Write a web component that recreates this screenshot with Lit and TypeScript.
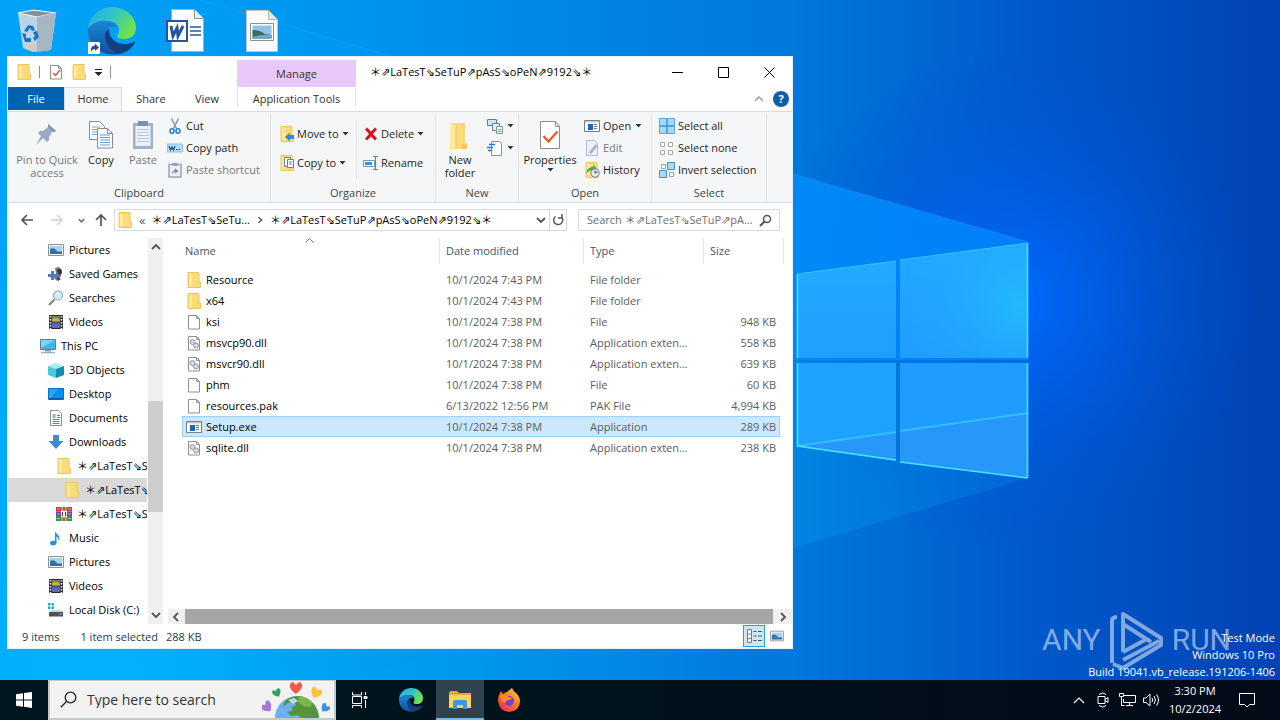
import { LitElement, html, svg, css, nothing } from "lit";
import { customElement, state, property } from "lit/decorators.js";
import { classMap } from "lit/directives/class-map.js";

const FOLDER_NAME = "＊⇗LaTesT⇘SeTuP⇗pAsS⇘oPeN⇗9192⇘＊";

const page = svg`<path d="M2.500 1.500h8l3 3v10.500h-11z" fill="#fff" stroke="#8f8f8f"/><path d="M10.500 1.500v3h3" fill="none" stroke="#8f8f8f"/>`;
const folder = svg`<path d="M2 .5h11v9.500h1.500v5.500H2z" fill="#fbdc78"/><path d="M2 .5h11v9.500h1.500v5.500H2z" fill="none" stroke="#eec65b"/><path d="M3 1.500h3v13H3z" fill="#ffe9a0"/>`;
const picture = svg`<path d="M.5 2.500h15v11H.5z" fill="#fff" stroke="#8a9096"/><path d="M2 4h12v8H2z" fill="#a5d4f3"/><path d="M2 7q4-2 6 1t6 1v1H2z" fill="#3b7396"/><path d="M2 10h12v2H2z" fill="#2c6fae"/>`;
const film = svg`<path d="M1 1h14v14H1z" fill="#2d2d33"/><path d="M4 2h8v5.500H4z" fill="#6d8a4c"/><path d="M4 8.500h8V14H4z" fill="#5668b8"/><path d="M4 5q4-3 8 1v1.500H4z" fill="#c5ad4d"/><path d="M2.500 2v13M13.500 2v13" stroke="#fff" stroke-width="1.500" stroke-dasharray="1.500 1.500"/>`;

const ICONS: Record<string, unknown> = {
  folder,
  file: page,
  dll: svg`${page}<circle cx="6.500" cy="7" r="2.500" fill="#d5dbe0" stroke="#8d9aa4"/><circle cx="10" cy="10.500" r="2.500" fill="#d5dbe0" stroke="#8d9aa4"/>`,
  exe: svg`<path d="M.5 2.500h15v11H.5z" fill="#fff" stroke="#7d7d7d"/><path d="M1 3h14v1.500H1z" fill="#c6ccd1"/><path d="M4 6h5v6H4z" fill="#1668b8"/><path d="M10 6.500h3M10 8.500h3M10 10.500h3" stroke="#777"/>`,
  check: svg`${page}<path d="M5 9l2.500 2.500L12 6" fill="none" stroke="#d9553a" stroke-width="1.500"/>`,
  picture,
  film,
  games: svg`<path d="M7 2l4-1 3 3-1 6-4 5-3-3 2-4z" fill="#6c7479"/><path d="M9 4l4-1 1 4-3 2z" fill="#2b3033"/><path d="M3 5h3v3h3v3H6v3H3v-3H0V8h3z" fill="#4e7fae"/><path d="M9 11l4 2-3 2z" fill="#33393c"/>`,
  search: svg`<path d="M6.500 9.500L1 15" stroke="#8c7a66" stroke-width="2"/><circle cx="10" cy="5.500" r="4.500" fill="#cfeafa" stroke="#8fa9ba" stroke-width="1.200"/><path d="M7.500 5q1-2 3-2" stroke="#fff" fill="none"/>`,
  pc: svg`<path d="M.5 1.500h15v10H.5z" fill="#3fb4ee" stroke="#6a7a86"/><path d="M1 2h14L1 10z" fill="#7bd2f7"/><path d="M5 12h6v1.500H5z" fill="#8fa0ab"/><path d="M1 14.500h14" stroke="#8fb3c6" stroke-width="1.500"/>`,
  cube: svg`<path d="M0 4l8-3 8 3-8 3z" fill="#a5ecf3"/><path d="M0 4l8 3v9l-8-3z" fill="#4cc9d9"/><path d="M16 4L8 7v9l8-3z" fill="#0e93ac"/>`,
  desktop: svg`<path d="M.5 2.500h15v11H.5z" fill="#0d8de6" stroke="#0a72bd"/><path d="M1 3h9L3 12H1z" fill="#27a4f5"/><path d="M1 12h14v1.500H1z" fill="#075a9b"/>`,
  doc: svg`<path d="M2.500.5h8l3 3v12h-11z" fill="#fff" stroke="#8f8f8f"/><path d="M5 5h2M4.500 9.500h7M4.500 11.500h7M9 5.500h3M9 7.500h3M4.500 13.500h7" stroke="#3f8fc9"/><path d="M4.500 4h3v4h-3z" fill="#7fb8df"/>`,
  down: svg`<path d="M5 1h6v6h4.500L8 15 .5 7H5z" fill="#3c8ad3"/>`,
  rar: svg`<path d="M0 1h16v4.500H0z" fill="#c23c4b"/><path d="M0 5.500h16V10H0z" fill="#6a4aa8"/><path d="M0 10h16v5H0z" fill="#2f9a4b"/><path d="M5 1h6v14H5z" fill="#b9a06a"/><path d="M5 5h6v6H5z" fill="#f6efe0"/><path d="M6.500 6v4M9.500 6v4M8 1v3M8 12v3" stroke="#5b3a22"/><path d="M1 3h3M12 3h3M1 8h3M12 8h3M1 12.500h3M12 12.500h3" stroke="#fff" stroke-opacity=".5"/>`,
  music: svg`<path d="M7 1c.5 3 5 4 4.500 8-.3 1-.5 1.500-1 2 .5-3-1-4-2-4.500V13c0 1.500-1.500 2.500-3.500 2.500S2 14.500 2 13s1.500-2.300 3-2.300c1 0 1.500.2 2 .4z" fill="#1f93e6"/>`,
  disk: svg`<path d="M1 10l3-2h9l2 2z" fill="#cfd4d6"/><path d="M1 10h14v4.500H1z" fill="#4a5257"/><path d="M11 12h3" stroke="#4fe07a"/><path d="M0 1h2.500v2.500H0zM3.500 1H6v2.500H3.500zM0 4.500h2.500V7H0zM3.500 4.500H6V7H3.500z" fill="#19aee0"/>`,
  cut: svg`<path d="M4.500.5l5 10M11.500.5l-5 10" stroke="#8697a5" stroke-width="1.500"/><ellipse cx="5" cy="13" rx="2" ry="2.200" fill="none" stroke="#2c82c9" stroke-width="1.600"/><ellipse cx="11" cy="13" rx="2" ry="2.200" fill="none" stroke="#2c82c9" stroke-width="1.600"/>`,
  path: svg`<path d="M.5 4h15v8H.5z" fill="#b5ddf4" stroke="#8cc4e6"/><path d="M2 6l1.500 4L5 7l1.500 3L8 6M9 9.500h1.500M11.500 9.500H13" fill="none" stroke="#1d4a7c" stroke-width="1.200"/>`,
  shortcut: svg`<path d="M2 2.500h12v12.500H2z" fill="#eef1f8" stroke="#98a5c0" stroke-width="1.500"/><path d="M5.500.8h5V4h-5z" fill="#98a5c0"/><path d="M5 12.500c0-3 1-4 3-4.500V6l3.500 3L8 12v-2c-1.500.3-2 1-3 2.500z" fill="#8190b0"/>`,
  moveto: svg`${folder}<path d="M15 9h-4V6.500L6 11l5 4.500V13h4z" fill="#3b84cf"/>`,
  copyto: svg`${folder}<path d="M5.500 2.500h6v9h-6z" fill="#fff" stroke="#68809a"/><path d="M8.500 4.500h6v8h-6z" fill="#fff" stroke="#68809a"/><path d="M10 7h3M10 9h3" stroke="#4a90d0"/>`,
  del: svg`<path d="M2 3.500L4 1.500l4 4 4-4 2 2-4 4.500 4 4.500-2 2-4-4-4 4-2-2L6 8z" fill="#d3141f"/>`,
  rename: svg`<path d="M.5 5.500h11v6H.5z" fill="#fff" stroke="#7c93a8"/><path d="M2 7h7v3H2z" fill="#3e8fd2"/><path d="M10 1.500h5M12.500 1.500v13M10 14.500h5" stroke="#6c7d8c"/>`,
  newitem: svg`<path d="M.5 1.500h9v6h-9z" fill="#cde5f6" stroke="#4c7faa"/><path d="M5.500 5.500h7v7h-7z" fill="#e3eef7" stroke="#687f92"/><path d="M9.500 8.500h6v7h-6z" fill="#fff" stroke="#8f8f8f"/><path d="M11 11.500h3M11 13.500h3" stroke="#d8765c"/>`,
  easy: svg`<path d="M4.500 1.500h8l2 2v12h-10z" fill="#fff" stroke="#87919a"/><path d="M2 4.500h6M0 7.500h6M1 10.500h4" stroke="#2b78bd" stroke-width="1.300"/>`,
  edit: svg`<path d="M2.500.5h8l3 3v12h-11z" fill="#eef1f9" stroke="#b1bad0"/><path d="M4.500 13l7-9 2.500 2-7 8z" fill="#a9b5d3"/>`,
  history: svg`${folder}<path d="M2 12q1-7 7-7V2.500L13 7l-4 4V8Q5 8 2 12z" fill="#3daa43"/><circle cx="11" cy="11" r="4.200" fill="#e5e9ea" stroke="#757c80"/><path d="M11 8.500V11l2.500-1" fill="none" stroke="#444"/>`,
  selall: svg`<path d="M.5.5h15v15H.5z" fill="#a6d8fa" stroke="#5aa7df"/><path d="M8 1v14M1 8h14" stroke="#3d94d2" stroke-width="1.500"/>`,
  selnone: svg`<path d="M1.500 2.500h4v4h-4zM9.500 2.500h4v4h-4zM1.500 10.500h4v4h-4zM9.500 10.500h4v4h-4z" fill="#fff" stroke="#a8a8a8"/>`,
  selinv: svg`<path d="M8.500.5h7v7h-7zM.5 8.500h7v7h-7z" fill="#a9d8f9" stroke="#3d94d2"/><path d="M2.500 2.500h4v4h-4zM10.500 10.500h4v4h-4z" fill="#fff" stroke="#8fa5b5"/>`,
  details: svg`<path d="M1.500 1.500h4v13h-4z" fill="#fff" stroke="#8b7474"/><path d="M1 6h5M1 10.500h5" stroke="#8b7474"/><path d="M7.500 3.500h3M12 3.500h4M7.500 8h3M12 8h4M7.500 12.500h3M12 12.500h4" stroke="#555"/>`,
};

const icon = (name: string) => html`<svg class="i16" viewBox="0 0 16 16" aria-hidden="true">${ICONS[name]}</svg>`;

const BIG: Record<string, unknown> = {
  pin: svg`<path d="M17 5l8 7-2 1-2 0-3 5v3l-2 2-4-4-7 7 5-9-3-3 2-2h3l5-4z" fill="#97a9c5"/><path d="M17 5l8 7-2 1-6-5z" fill="#7d91b3"/>`,
  copy: svg`<path d="M4.500 2.500h10l5 5v13h-15z" fill="#fff" stroke="#7f8b96"/><path d="M7 8h8M7 10.500h8M7 13h8M7 15.500h8" stroke="#6fa8dc"/><path d="M12.500 9.500h10l5 5v14.500h-15z" fill="#fff" stroke="#7f8b96"/><path d="M22.500 9.500v5h5" fill="none" stroke="#7f8b96"/><path d="M15 16h10M15 18.500h10M15 21h10M15 23.500h10M15 26h10" stroke="#5f9fd8"/>`,
  paste: svg`<path d="M6 4h20v26H6z" fill="#a3b0cb"/><path d="M8.500 7h15v20h-15z" fill="#edf1f9"/><path d="M11 2h10v5H11z" fill="#7f8fb2"/><path d="M10 10.500h12M10 13.500h12M10 16.500h12M10 19.500h12M10 22.500h12" stroke="#b9c5de"/>`,
  bigfolder: svg`<path d="M6 4h15v20h2v6H6z" fill="#fbd878"/><path d="M6 4l6 3v24l-6-3z" fill="#ffe9a6"/><path d="M12 7v23" stroke="#ecc45c"/><path d="M18 25h5v5h-5z" fill="#f6c755"/>`,
  props: svg`<path d="M6.500 2.500h15l4 5v22h-19z" fill="#fff" stroke="#8c8c8c"/><path d="M21.500 2.500v5h4" fill="none" stroke="#8c8c8c"/><path d="M9.500 17l5 5.500 9-10" fill="none" stroke="#e3602b" stroke-width="2.500"/>`,
};
const big = (name: string) => html`<svg class="i32" viewBox="0 0 32 32" aria-hidden="true">${BIG[name]}</svg>`;
const caret = html`<svg class="caret" viewBox="0 0 7 4" aria-hidden="true"><path d="M.5 0h6l-3 3.500z" fill="#333" /></svg>`;

const edge = svg`
  <defs>
    <linearGradient id="eg" x1="0" y1="0" x2="1" y2=".5"><stop offset="0" stop-color="#2aa7e5"/><stop offset=".5" stop-color="#2fc5c9"/><stop offset="1" stop-color="#6fe04f"/></linearGradient>
    <linearGradient id="eb" x1="0" y1="0" x2="0" y2="1"><stop offset="0" stop-color="#1c86d8"/><stop offset="1" stop-color="#0f4f9e"/></linearGradient>
  </defs>
  <path d="M0 22C1 9 12 0 24 0c14 0 24 10 24 21 0 7-5 11-12 11-4 0-7-1-7-3 0-1 2-2 2-6 0-5-4-9-11-9-8 0-16 4-20 8z" fill="url(#eg)"/>
  <path d="M0 22c4-6 11-9 18-8 6 0 10 3 11 6-5-2-12 1-12 9 0 9 7 16 14 18C13 50-1 39 0 22z" fill="url(#eb)"/>
  <path d="M17 27c-1 10 7 19 14 20 7-1 13-6 16-11 0-1 0-2-1-1-11 5-25 1-25-13-2 1-4 3-4 5z" fill="#123f80"/>`;

const wallpaper = html`<svg class="wallpaper" viewBox="0 0 1280 680" preserveAspectRatio="xMaxYMid slice" aria-hidden="true">
  <defs>
    <linearGradient id="base"><stop offset="0" stop-color="#00a4f8"/><stop offset=".3" stop-color="#0093ee"/><stop offset=".62" stop-color="#0078dc"/><stop offset=".8" stop-color="#005acc"/><stop offset="1" stop-color="#0142b4"/></linearGradient>
    <radialGradient id="glow" gradientUnits="userSpaceOnUse" cx="1010" cy="300" r="250"><stop offset="0" stop-color="#006bff"/><stop offset=".35" stop-color="#0062f2" stop-opacity=".65"/><stop offset="1" stop-color="#0050d0" stop-opacity="0"/></radialGradient>
    <radialGradient id="low" gradientUnits="userSpaceOnUse" cx="100" cy="680" r="650"><stop offset="0" stop-color="#00b8ff" stop-opacity=".8"/><stop offset="1" stop-color="#00a0f0" stop-opacity="0"/></radialGradient>
    <linearGradient id="beam" gradientUnits="userSpaceOnUse" x1="200" y1="0" x2="1028" y2="0"><stop offset="0" stop-color="#00a4f6" stop-opacity=".1"/><stop offset=".72" stop-color="#008cfa" stop-opacity=".9"/><stop offset="1" stop-color="#0088ff" stop-opacity=".75"/></linearGradient>
    <linearGradient id="beamlow" gradientUnits="userSpaceOnUse" x1="200" y1="0" x2="1028" y2="0"><stop offset="0" stop-color="#00a4f6" stop-opacity="0"/><stop offset=".72" stop-color="#0088e4" stop-opacity=".8"/><stop offset="1" stop-color="#006cd8" stop-opacity=".7"/></linearGradient>
    <linearGradient id="pane" x1="0" y1="0" x2="0" y2="1"><stop offset="0" stop-color="#22aaff"/><stop offset="1" stop-color="#1f9eff"/></linearGradient>
    <radialGradient id="shine" gradientUnits="userSpaceOnUse" cx="1020" cy="305" r="110"><stop offset="0" stop-color="#25c0fa" stop-opacity=".7"/><stop offset="1" stop-color="#22a8ff" stop-opacity="0"/></radialGradient>
  </defs>
  <path d="M0 0h1280v680H0z" fill="url(#base)"/>
  <path d="M0 0h1280v680H0z" fill="url(#low)"/>
  <path d="M0 0h1280v680H0z" fill="url(#glow)"/>
  <path d="M200 0l593 174 235 68v118H200z" fill="url(#beam)"/>
  <path d="M1028 478L793 548 350 680H200V360h828z" fill="url(#beamlow)"/>
  <path d="M200 0l593 174 235 68" fill="none" stroke="#2aa3ff" stroke-opacity=".35"/>
  <path d="M797 274l99-13v97h-99z" fill="url(#pane)"/>
  <path d="M900 260l128-17v115H900z" fill="url(#pane)"/>
  <path d="M900 260l128-17v115H900z" fill="url(#shine)"/>
  <path d="M797 363h99v98l-99-15z" fill="#1ea2ff"/>
  <path d="M900 363h128v115l-128-16z" fill="#1f9cff"/>
  <path d="M797 446l99-14v29zM900 431l128-18v65l-128-16z" fill="#2797fa"/>
  <path d="M797 446l99-14M900 431l128-18" stroke="#35bdff" stroke-width="2"/>
  <path d="M797.500 274v84M797.500 363v83l98.500 14M900 462l127.500 16M1027.500 243v115M1027.500 363v115" fill="none" stroke="#47e3ff" stroke-width="1.600"/>
  <path d="M797 274l99-13M900 260l128-17" stroke="#36c5ff"/>
</svg>`;

@customElement("file-ribbon")
export class FileRibbon extends LitElement {
  static styles = css`
    :host { display: flex; background: #f5f6f7; border-block: 1px solid #dadbdc; padding-top: 2px; }
    .group { display: flex; flex-direction: column; border-right: 1px solid #e0e1e3; box-sizing: border-box; flex: none; }
    .body { display: flex; height: 70px; padding-top: 1px; box-sizing: border-box; }
    .label { text-align: center; line-height: 18px; color: #444; }
    .clip { width: 263px; } .org { width: 165px; } .new { width: 83px; } .open { width: 133px; } .sel { width: 115px; }
    .clip .body { padding-left: 6px; }
    button { font: inherit; color: #1e1e1e; background: none; border: 0; padding: 0; display: flex; align-items: center; white-space: nowrap; }
    .large { flex: none; flex-direction: column; line-height: 13px; padding-top: 4px; gap: 2px; text-align: center; justify-content: flex-start; width: 42px; white-space: normal; }
    .large.wide { width: 66px; }
    .large.create { width: 48px; }
    .large.props { width: 62px; }
    .off { color: #767676; }
    .stack { display: flex; flex-direction: column; padding-left: 7px; }
    .stack.tight { padding-left: 3px; }
    .stack button { height: 22px; gap: 3px; }
    .stack.two { padding: 4px 0 0 8px; width: 85px; box-sizing: border-box; }
    .stack.two button { height: 29px; gap: 2px; }
    .stack.two.right { padding-left: 6px; width: 77px; }
    .rule { width: 1px; background: #e0e1e3; margin: 5px 0; }
    .i16 { width: 16px; height: 16px; flex: none; }
    .i32 { width: 32px; height: 32px; flex: none; }
    .caret { width: 7px; height: 4px; margin-left: 1px; flex: none; }
  `;
  render() {
    return html`
      <div class="group clip">
        <div class="body">
          <button class="large wide off">${big("pin")}<span>Pin to Quick access</span></button>
          <button class="large">${big("copy")}<span>Copy</span></button>
          <button class="large off">${big("paste")}<span>Paste</span></button>
          <div class="stack tight">
            <button>${icon("cut")}<span>Cut</span></button>
            <button>${icon("path")}<span>Copy path</span></button>
            <button class="off">${icon("shortcut")}<span>Paste shortcut</span></button>
          </div>
        </div>
        <div class="label">Clipboard</div>
      </div>
      <div class="group org">
        <div class="body">
          <div class="stack two">
            <button>${icon("moveto")}<span>Move to</span>${caret}</button>
            <button>${icon("copyto")}<span>Copy to</span>${caret}</button>
          </div>
          <div class="rule"></div>
          <div class="stack two right">
            <button>${icon("del")}<span>Delete</span>${caret}</button>
            <button>${icon("rename")}<span>Rename</span></button>
          </div>
        </div>
        <div class="label">Organize</div>
      </div>
      <div class="group new">
        <div class="body">
          <button class="large create">${big("bigfolder")}<span>New folder</span></button>
          <div class="stack tight">
            <button aria-label="New item">${icon("newitem")}${caret}</button>
            <button aria-label="Easy access">${icon("easy")}${caret}</button>
          </div>
        </div>
        <div class="label">New</div>
      </div>
      <div class="group open">
        <div class="body">
          <button class="large props">${big("props")}<span>Properties</span>${caret}</button>
          <div class="stack tight">
            <button>${icon("exe")}<span>Open</span>${caret}</button>
            <button class="off">${icon("edit")}<span>Edit</span></button>
            <button>${icon("history")}<span>History</span></button>
          </div>
        </div>
        <div class="label">Open</div>
      </div>
      <div class="group sel">
        <div class="body">
          <div class="stack">
            <button>${icon("selall")}<span>Select all</span></button>
            <button>${icon("selnone")}<span>Select none</span></button>
            <button>${icon("selinv")}<span>Invert selection</span></button>
          </div>
        </div>
        <div class="label">Select</div>
      </div>
    `;
  }
}

type FileRow = { icon: string; name: string; date: string; type: string; size: string };
const FILES: FileRow[] = [
  { icon: "folder", name: "Resource", date: "10/1/2024 7:43 PM", type: "File folder", size: "" },
  { icon: "folder", name: "x64", date: "10/1/2024 7:43 PM", type: "File folder", size: "" },
  { icon: "file", name: "ksi", date: "10/1/2024 7:38 PM", type: "File", size: "948 KB" },
  { icon: "dll", name: "msvcp90.dll", date: "10/1/2024 7:38 PM", type: "Application exten...", size: "558 KB" },
  { icon: "dll", name: "msvcr90.dll", date: "10/1/2024 7:38 PM", type: "Application exten...", size: "639 KB" },
  { icon: "file", name: "phm", date: "10/1/2024 7:38 PM", type: "File", size: "60 KB" },
  { icon: "file", name: "resources.pak", date: "6/13/2022 12:56 PM", type: "PAK File", size: "4,994 KB" },
  { icon: "exe", name: "Setup.exe", date: "10/1/2024 7:38 PM", type: "Application", size: "289 KB" },
  { icon: "dll", name: "sqlite.dll", date: "10/1/2024 7:38 PM", type: "Application exten...", size: "238 KB" },
];

const TREE: [string, string, number][] = [
  ["picture", "Pictures", 1], ["games", "Saved Games", 1], ["search", "Searches", 1], ["film", "Videos", 1],
  ["pc", "This PC", 0], ["cube", "3D Objects", 1], ["desktop", "Desktop", 1], ["doc", "Documents", 1],
  ["down", "Downloads", 1], ["folder", FOLDER_NAME, 2], ["folder", FOLDER_NAME, 3], ["rar", FOLDER_NAME, 2],
  ["music", "Music", 1], ["picture", "Pictures", 1], ["film", "Videos", 1], ["disk", "Local Disk (C:)", 1],
];

const chevron = (d: string) => html`<svg class="chev" viewBox="0 0 10 10" aria-hidden="true"><path d=${d} fill="none" stroke="#555" stroke-width="1.800" /></svg>`;

@customElement("explorer-window")
export class ExplorerWindow extends LitElement {
  @state() private selected = 7;

  static styles = css`
    :host { display: flex; flex-direction: column; background: #fff; border: 1px solid #e6f1fa; box-sizing: border-box; color: #000; }
    button { font: inherit; color: inherit; background: none; border: 0; padding: 0; }
    .i16 { width: 16px; height: 16px; flex: none; display: block; }
    .chev { width: 10px; height: 10px; display: block; }
    header { display: flex; }
    .left { width: 229px; flex: none; }
    .quick { height: 30px; display: flex; align-items: center; padding-left: 8px; gap: 7px; box-sizing: border-box; }
    .bar { width: 1px; height: 12px; background: #8c8c8c; }
    .bar.far { margin-right: 1px; }
    .drop { display: flex; }
    .drop svg { width: 9px; height: 9px; }
    .tabs { display: flex; height: 24px; color: #333; }
    .tabs button { line-height: 22px; width: 58px; height: 23px; }
    .tabs .file { background: #0063b1; color: #fff; width: 56px; }
    .tabs .home { background: #f5f6f7; border: 1px solid #dadbdc; border-bottom: 0; height: 24px; line-height: 20px; padding-bottom: 1px; margin-bottom: -1px; position: relative; z-index: 1; }
    .tabs .view { width: 54px; }
    .context { width: 119px; flex: none; padding-top: 3px; display: flex; flex-direction: column; color: #333; }
    .manage { background: #e9c9fb; height: 27px; line-height: 28px; text-align: center; }
    .context button { border-inline: 1px solid #eadcf3; height: 18px; line-height: 22px; margin-top: 1px; white-space: nowrap; }
    .right { flex: 1; min-width: 0; }
    .title { display: flex; height: 30px; padding-left: 14px; align-items: center; }
    h1 { flex: 1; min-width: 0; font: inherit; margin: 0; white-space: nowrap; }
    .title button { width: 46px; height: 30px; display: grid; place-items: center; }
    .title svg { width: 11px; height: 11px; }
    .tools { display: flex; justify-content: flex-end; align-items: center; gap: 9px; height: 23px; padding-right: 3px; }
    .tools svg { display: block; }
    .help { width: 16px; height: 16px; border-radius: 8px; background: #0f5ea8; color: #fff; font-weight: 700; line-height: 16px; text-align: center; }
    .address { display: flex; align-items: center; padding: 6px 12px 7px 12px; height: 22px; }
    .nav { width: 94px; display: flex; align-items: center; flex: none; }
    .nav svg { width: 14px; height: 14px; display: block; }
    .nav button:nth-child(1) { width: 30px; }
    .nav button:nth-child(2) { width: 27px; }
    .nav button:nth-child(3) { width: 17px; }
    .nav .chev { width: 9px; height: 9px; opacity: .8; }
    .crumbs { flex: 1; min-width: 0; display: flex; align-items: center; border: 1px solid #d9d9d9; height: 22px; box-sizing: border-box; padding-left: 2px; white-space: nowrap; }
    .crumbs .sep { width: 20px; display: grid; place-items: center; }
    .crumbs .sep svg { width: 8px; height: 8px; }
    .crumbs .first { padding: 0 6px 0 6px; font-size: 13px; color: #555; }
    .crumbs .end { margin-left: auto; display: flex; height: 100%; }
    .crumbs .end button { width: 16px; display: grid; place-items: center; }
    .crumbs .end button + button { border-left: 1px solid #d9d9d9; width: 17px; }
    .find { width: 202px; height: 22px; box-sizing: border-box; border: 1px solid #d9d9d9; margin-left: 11px; display: flex; align-items: center; padding: 0 7px 0 8px; }
    .find input { flex: 1; min-width: 0; border: 0; outline: 0; background: none; padding: 0; font: inherit; text-overflow: ellipsis; }
    .find input::placeholder { color: #6d6d6d; opacity: 1; }
    .find svg { width: 13px; height: 13px; flex: none; }
    .main { display: flex; flex: 1; min-height: 0; }
    .tree { width: 139px; flex: none; margin: 0; padding: 0; list-style: none; overflow: hidden; }
    .tree button { display: flex; align-items: center; gap: 5px; height: 24px; width: 100%; white-space: nowrap; padding-left: 40px; }
    .tree .l0 { padding-left: 32px; }
    .tree .l2 { padding-left: 48px; }
    .tree .l3 { padding-left: 56px; }
    .tree .on { background: #d9d9d9; }
    .vscroll { width: 15px; background: #f0f0f0; margin-left: 1px; display: flex; flex-direction: column; align-items: center; box-sizing: border-box; padding: 4px 0; }
    .vscroll .thumb { width: 15px; background: #cdcdcd; flex: 112; }
    .vscroll .before { flex: 149; } .vscroll .after { flex: 98; }
    .list { flex: 1; min-width: 0; display: flex; flex-direction: column; padding-left: 5px; }
    .scroller { flex: 1; overflow: hidden; }
    table { border-collapse: separate; border-spacing: 0; table-layout: fixed; width: calc(100% - 8px); padding-left: 14px; }
    .c-date { width: 144px; } .c-type { width: 120px; } .c-size { width: 76px; } .c-gap { width: 4px; }
    th { font-weight: 400; text-align: left; padding: 0; height: 26px; color: #44546f; border-right: 1px solid #e5e5e5; padding-left: 6px; line-height: 26px; }
    th:first-child { padding-left: 3px; }
    .c-size-h { border-right: 0; }
    th:last-child { padding: 0; }
    .name-h { display: grid; grid-template-columns: 1fr 14px 1fr; }
    .name-h svg { width: 9px; height: 5px; }
    .spacer td { height: 5px; padding: 0; line-height: 0; }
    .row td { height: 19px; line-height: 17px; padding: 0 4px 0 6px; border-block: 1px solid transparent; color: #5c5c5c; white-space: nowrap; overflow: hidden; }
    .row td:first-child { padding-left: 3px; color: #000; border-left: 1px solid transparent; }
    .row td.size { text-align: right; padding-right: 3px; border-right: 1px solid transparent; }
    .row td.gap { padding: 0; }
    .row.on td:not(.gap) { background: #cce8ff; border-color: #99d1ff; }
    .cell { display: flex; align-items: center; gap: 4px; }
    .hscroll { height: 15px; background: #f0f0f0; display: flex; align-items: center; justify-content: space-between; padding: 0 4px 0 3px; }
    .hscroll .thumb { flex: 1; height: 15px; background: #a6a6a6; margin: 0 5px 0 4px; }
    footer { display: flex; align-items: center; height: 24px; padding: 0 7px 0 14px; color: #1e395b; }
    footer span { margin-right: 21px; line-height: 16px; padding-top: 1px; }
    footer span.tight { margin-right: 8px; }
    .views { margin-left: auto; display: flex; align-items: center; gap: 4px; }
    .views button { width: 16px; height: 22px; display: grid; place-items: center; }
    .views .on { width: 22px; box-sizing: border-box; border: 1px solid #26a0da; background: #cbe8f6; }
    .views .thumbs svg { width: 14px; height: 14px; }
  `;

  render() {
    return html`
      <header>
        <div class="left">
          <div class="quick">
            ${icon("folder")}<span class="bar far"></span>${icon("check")}${icon("folder")}
            <button class="drop" aria-label="Customize Quick Access Toolbar"><svg viewBox="0 0 9 9"><path d="M1 1.500h7" stroke="#222" /><path d="M.5 4h8l-4 4z" fill="#222" /></svg></button>
            <span class="bar"></span>
          </div>
          <div class="tabs"><button class="file">File</button><button class="home">Home</button><button>Share</button><button class="view">View</button></div>
        </div>
        <div class="context"><div class="manage">Manage</div><button>Application Tools</button></div>
        <div class="right">
          <div class="title">
            <h1>${FOLDER_NAME}</h1>
            <button aria-label="Minimize"><svg viewBox="0 0 11 11"><path d="M0 5.500h11" stroke="#000" /></svg></button>
            <button aria-label="Maximize"><svg viewBox="0 0 11 11"><path d="M.5.5h10v10H.5z" fill="none" stroke="#000" /></svg></button>
            <button aria-label="Close"><svg viewBox="0 0 11 11"><path d="M.5.5l10 10M10.500.5l-10 10" stroke="#000" /></svg></button>
          </div>
          <div class="tools">
            <button aria-label="Minimize the Ribbon"><svg width="10" height="6" viewBox="0 0 10 6"><path d="M1 5l4-4 4 4" fill="none" stroke="#999" stroke-width="1.400" /></svg></button>
            <button class="help" aria-label="Help">?</button>
          </div>
        </div>
      </header>
      <file-ribbon></file-ribbon>
      <div class="address">
        <div class="nav">
          <button aria-label="Back"><svg viewBox="0 0 14 14"><path d="M13 7H2M7 2L2 7l5 5" fill="none" stroke="#555" stroke-width="1.700" /></svg></button>
          <button aria-label="Forward"><svg viewBox="0 0 14 14"><path d="M1 7h11M7 2l5 5-5 5" fill="none" stroke="#d0d0d0" stroke-width="1.300" /></svg></button>
          <button aria-label="Recent locations">${chevron("M2 3.500L5 6.500l3-3")}</button>
          <button aria-label="Up"><svg viewBox="0 0 14 14"><path d="M7 13V2M2 7l5-5 5 5" fill="none" stroke="#555" stroke-width="1.700" /></svg></button>
        </div>
        <div class="crumbs">
          ${icon("folder")}<span class="first">«</span><span>＊⇗LaTesT⇘SeTu...</span>
          <span class="sep">${chevron("M3 1.500L7 5 3 8.500")}</span><span>${FOLDER_NAME}</span>
          <div class="end">
            <button aria-label="Previous locations">${chevron("M1 3l4 4 4-4")}</button>
            <button aria-label="Refresh"><svg class="i16" viewBox="0 0 16 16"><path d="M11.500 5a4.500 4.500 0 1 1-6-.5M12 2v4H8" fill="none" stroke="#555" stroke-width="1.500" /></svg></button>
          </div>
        </div>
        <label class="find"><input type="text" aria-label="Search folder" placeholder="Search ＊⇗LaTesT⇘SeTuP⇗pA..." /><svg viewBox="0 0 13 13"><circle cx="8" cy="5" r="3.500" fill="none" stroke="#555" stroke-width="1.500" /><path d="M5.500 7.500L1 12" stroke="#555" stroke-width="2" /></svg></label>
      </div>
      <div class="main">
        <ul class="tree">
          ${TREE.map(([ic, name, level]) => html`<li><button class=${classMap({ ["l" + level]: true, on: level === 3 })}>${icon(ic)}<span>${name}</span></button></li>`)}
        </ul>
        <div class="vscroll">${chevron("M1 7l4-4 4 4")}<div class="before"></div><div class="thumb"></div><div class="after"></div>${chevron("M1 3l4 4 4-4")}</div>
        <div class="list">
          <div class="scroller">
            <table>
              <colgroup><col /><col class="c-date" /><col class="c-type" /><col class="c-size" /><col class="c-gap" /></colgroup>
              <thead><tr>
                <th><div class="name-h"><span>Name</span><svg viewBox="0 0 9 5"><path d="M.5 4.500l4-4 4 4" fill="none" stroke="#777" /></svg></div></th>
                <th>Date modified</th><th>Type</th><th class="c-size-h">Size</th><th></th>
              </tr></thead>
              <tbody>
                <tr class="spacer"><td colspan="5"></td></tr>
                ${FILES.map((f, i) => html`<tr class=${classMap({ row: true, on: i === this.selected })} @click=${() => (this.selected = i)}>
                  <td><div class="cell">${icon(f.icon)}<span>${f.name}</span></div></td><td>${f.date}</td><td>${f.type}</td><td class="size">${f.size || nothing}</td><td class="gap"></td>
                </tr>`)}
              </tbody>
            </table>
          </div>
          <div class="hscroll">${chevron("M7 1L3 5l4 4")}<div class="thumb"></div>${chevron("M3 1l4 4-4 4")}</div>
        </div>
      </div>
      <footer>
        <span>9 items</span><span class="tight">1 item selected</span><span>288 KB</span>
        <div class="views"><button class="on" aria-label="Details view">${icon("details")}</button><button class="thumbs" aria-label="Large icons view">${icon("picture")}</button></div>
      </footer>
    `;
  }
}

const HEART = "M0 6C-10-1-5.500-7-2.500-5.500L0-3l2.500-2.500C5.500-7 10-1 0 6z";

@customElement("task-bar")
export class TaskBar extends LitElement {
  @property() time = "3:30 PM";
  @property() date = "10/2/2024";

  static styles = css`
    :host { display: flex; height: 40px; background: linear-gradient(90deg, #001722, #00121c 50%, #030a18); color: #fff; }
    button { font: inherit; color: inherit; background: none; border: 0; padding: 0; display: grid; place-items: center; width: 48px; flex: none; }
    svg { display: block; flex: none; }
    .search { width: 288px; flex: none; box-sizing: border-box; background: #f2f2f2; border: 2px solid #c6c9ca; border-top-width: 1px; display: flex; align-items: center; padding-left: 10px; gap: 10px; overflow: hidden; }
    .search input { flex: 1; min-width: 0; border: 0; outline: 0; background: none; font: inherit; font-size: 14px; padding: 0; }
    .search input::placeholder { color: #333; opacity: 1; }
    .apps { display: flex; gap: 1px; padding-right: 1px; }
    .apps .view { margin-right: 2px; }
    .apps .active { background: #2f424e; box-shadow: inset 0 -2px #76b9ed; }
    .tray { margin-left: auto; display: flex; align-items: center; }
    .tray button { width: 24px; height: 40px; }
    .tray .clock { width: 64px; line-height: 18px; align-content: center; }
    .tray .notes { width: 40px; }
    .tray .show { width: 13px; }
  `;
  render() {
    return html`
      <button aria-label="Start"><svg width="16" height="16" viewBox="0 0 16 16"><path d="M0 2.200l7-1v6.300H0zM8 1l8-1v7.500H8zM0 8.500h7v6.300l-7-1zM8 8.500h8V16l-8-1.200z" fill="#fff" /></svg></button>
      <label class="search">
        <svg width="17" height="17" viewBox="0 0 17 17"><circle cx="10.500" cy="6.500" r="5.300" fill="none" stroke="#222" stroke-width="1.300" /><path d="M6.500 10.500L.8 16.200" stroke="#222" stroke-width="1.300" /></svg>
        <input type="text" aria-label="Search" placeholder="Type here to search" />
        <svg width="72" height="37" viewBox="0 0 72 37">
          <path d="M13 37a22 22 0 0 1 44 0z" fill="#6fb0f5" />
          <path d="M23 20q6-5 14-5 8 1 14 7 5 6 6 15H40l-5-3-6 1-4-4 6-2-2-3 5-2-2-3-6 1-5 4z" fill="#55953a" />
          <path d="M37 15q8 1 14 7l-3 4-7-1-5-4z" fill="#7ab648" />
          <path d="M26 19l6-2 4 3-5 3z" fill="#b5e0f8" />
          <g transform="translate(34 7)"><path d=${HEART} fill="#ee5a44" /></g>
          <g transform="translate(15 12) rotate(-25) scale(.7)"><path d=${HEART} fill="#2fa35b" /></g>
          <g transform="translate(54 12) rotate(25) scale(.9)"><path d=${HEART} fill="#f8c23a" /></g>
          <g transform="translate(5 26) rotate(-40) scale(.9)"><path d=${HEART} fill="#a678d8" /></g>
          <g transform="translate(63 27) rotate(40) scale(.7)"><path d=${HEART} fill="#3c90e0" /></g>
        </svg>
      </label>
      <div class="apps">
        <button class="view" aria-label="Task View"><svg width="16" height="16" viewBox="0 0 16 16" fill="none" stroke="#fff"><path d="M.5 0v3h9V0M.5 4.500h9v7h-9zM.5 16v-2.500h9V16M13.500 0v3M13.500 8v8" /><path d="M12 4.500h3v2h-3z" fill="#fff" /></svg></button>
        <button aria-label="Edge"><svg width="24" height="24" viewBox="0 0 48 48">${edge}</svg></button>
        <button class="active" aria-label="File Explorer"><svg width="22" height="18" viewBox="0 0 22 18"><path d="M0 1.500L1.500 0H8l2 2h12v15H0z" fill="#e9a52b" /><path d="M0 4h22v13H0z" fill="#ffd45e" /><path d="M4 18v-7q0-2 2-2h10q2 0 2 2v7h-4v-4H8v4z" fill="#3f97da" /></svg></button>
        <button aria-label="Firefox"><svg width="24" height="24" viewBox="0 0 24 24">
          <defs><linearGradient id="fx" x1="1" y1="0" x2=".2" y2="1"><stop offset="0" stop-color="#ffe23c" /><stop offset=".5" stop-color="#ff7a1f" /><stop offset="1" stop-color="#f2255d" /></linearGradient></defs>
          <path d="M3 5l1-2 2 3q2-2 4-2l5-4q1 3 4 5 4 4 4 8 0 10-11 11Q2 23 1 13q0-5 2-8z" fill="url(#fx)" />
          <circle cx="12" cy="13" r="5" fill="#7c3fd0" /><path d="M3 8q5-2 9 1l3 1q-1 2-4 2-3 1-3 3Q3 13 3 8z" fill="#ff8f22" />
        </svg></button>
      </div>
      <div class="tray">
        <button aria-label="Show hidden icons"><svg width="12" height="8" viewBox="0 0 12 8"><path d="M1 7l5-5 5 5" fill="none" stroke="#fff" stroke-width="1.200" /></svg></button>
        <button aria-label="Meet Now"><svg width="14" height="16" viewBox="0 0 14 16" fill="none" stroke="#fff"><path d="M2 4.500h7v7H2zM9 7.500l3-2v5l-3-2M3 2.500q4-3 7 0M3 13.500q4 3 7 0" /></svg></button>
        <button aria-label="Network"><svg width="17" height="14" viewBox="0 0 17 14" fill="none" stroke="#fff"><path d="M5 2.500h11.500v7H4.500V6M10.500 9.500v3M7 12.500h7M.5.500h4v3h-4zM2.500 3.500v9h3" /></svg></button>
        <button aria-label="Volume"><svg width="17" height="14" viewBox="0 0 17 14" fill="none" stroke="#fff"><path d="M.5 5h2.500l4-4v12L3 9.500H.5zM9 5q1.500 2 0 4M11 3q3 4 0 8M13.500 1.500q4 5.500 0 11" /></svg></button>
        <button class="clock"><span>${this.time}</span><span>${this.date}</span></button>
        <button class="notes" aria-label="Notifications"><svg width="16" height="16" viewBox="0 0 16 16"><path d="M.5 1.500h15v11h-5L8 15l-2.500-2.500h-5z" fill="none" stroke="#fff" /></svg></button>
        <button class="show" aria-label="Show desktop"></button>
      </div>
    `;
  }
}

@customElement("app-root")
export class AppRoot extends LitElement {
  static styles = css`
    :host { display: flex; flex-direction: column; height: 100vh; font: 11px/16px "Open Sans", "DejaVu Sans", "Noto Sans CJK JP", sans-serif; overflow: hidden; }
    .desktop { flex: 1; position: relative; overflow: hidden; background: #0078dc; }
    .wallpaper { position: absolute; inset: 0; width: 100%; height: 100%; }
    .shortcuts { position: absolute; left: 0; top: 7px; display: flex; gap: 1px; }
    .shortcuts a { width: 74px; height: 48px; display: grid; place-items: center; }
    .shortcuts svg { width: 48px; height: 48px; display: block; }
    .window { position: absolute; left: 7px; top: 56px; width: 786px; height: 593px; }
    .brand { position: absolute; right: 49px; bottom: 10px; display: flex; align-items: center; gap: 8px; color: #fff; opacity: .5; font: 400 30px/60px "Roboto", "Liberation Sans", sans-serif; }
    .brand svg { width: 55px; height: 60px; }
    .build { position: absolute; right: 5px; bottom: 0; margin: 0; text-align: right; color: #fff; line-height: 17px; }
  `;
  render() {
    return html`
      <main class="desktop">
        ${wallpaper}
        <nav class="shortcuts">
          <a href="#bin" aria-label="Recycle Bin"><svg viewBox="0 0 48 48">
            <path d="M5 6l15-3 23 3-5 37-18 2-10-4z" fill="#cfdae2" fill-opacity=".9" /><path d="M5 6l15-3 23 3-19 4z" fill="#7f93a3" /><path d="M5 6l19 4 19-4-23-3z" fill="none" stroke="#f2f7fa" stroke-width="1.200" /><path d="M24 10l19-4-5 37-14 2z" fill="#a7b6c2" />
            <path d="M11 24l4-6 5 1 2 4-3 1-2-3-3 4zM20 25l4-1 2 6-4 4-2-3 2-2zM9 26l4 1 0 4h5v4h-6z" fill="#1875c8" /><path d="M14 37l9 1v6l-8-3z" fill="#ecc0ab" />
          </svg></a>
          <a href="#edge" aria-label="Microsoft Edge"><svg viewBox="0 0 48 48">${edge}<path d="M0 35h12v12H0z" fill="#fff" /><path d="M3 45q-1-6 4-6.500V36.500l4 4-4 3.500v-2q-3 0-4 3z" fill="#2a4b8d" /></svg></a>
          <a href="#document" aria-label="Word document"><svg viewBox="0 0 48 48">
            <path d="M8.500 2.500h23l9 9v33h-32z" fill="#fff" stroke="#b9a9a0" /><path d="M31.500 2.500v9h9" fill="#eee" stroke="#8f8f8f" /><path d="M27 20h11M27 24h11M27 28h11" stroke="#2b579a" stroke-width="1.500" /><path d="M4 14h20v20H4z" fill="#fff" stroke="#2355a5" stroke-width="2" /><path d="M8 19l2 10 4-8 1 8 5-10" fill="none" stroke="#2355a5" stroke-width="3" />
          </svg></a>
          <a href="#image" aria-label="Image file"><svg viewBox="0 0 48 48">
            <path d="M8.500 3.500h22l9 9v32h-31z" fill="#fafafa" stroke="#c4c4c4" /><path d="M30.500 3.500v9h9" fill="#e5e5e5" stroke="#b5b5b5" /><path d="M12.500 16.500h23v17h-23z" fill="#fff" stroke="#8d8d8d" /><path d="M14.500 18.500h19v13h-19z" fill="#8ec4e8" /><path d="M14.500 23q8 0 12 4l7 1v3.500h-19z" fill="#3b6e60" /><path d="M14.500 30q9-3 19-2v3.500h-19z" fill="#73a8c4" />
          </svg></a>
        </nav>
        <explorer-window class="window"></explorer-window>
        <div class="brand"><span>ANY</span><svg viewBox="0 0 55 60" fill="none" stroke="#fff" stroke-width="4" stroke-linejoin="round"><path d="M3 53V11q0-4 5-4M14 42V4l38 24v7L14 58l-10-4M14 50l36-19M14 14l28 18M14 42l22-12M14 14v28" /></svg><span>RUN</span></div>
        <p class="build">Test Mode<br />Windows 10 Pro<br />Build 19041.vb_release.191206-1406</p>
      </main>
      <task-bar></task-bar>
    `;
  }
}
